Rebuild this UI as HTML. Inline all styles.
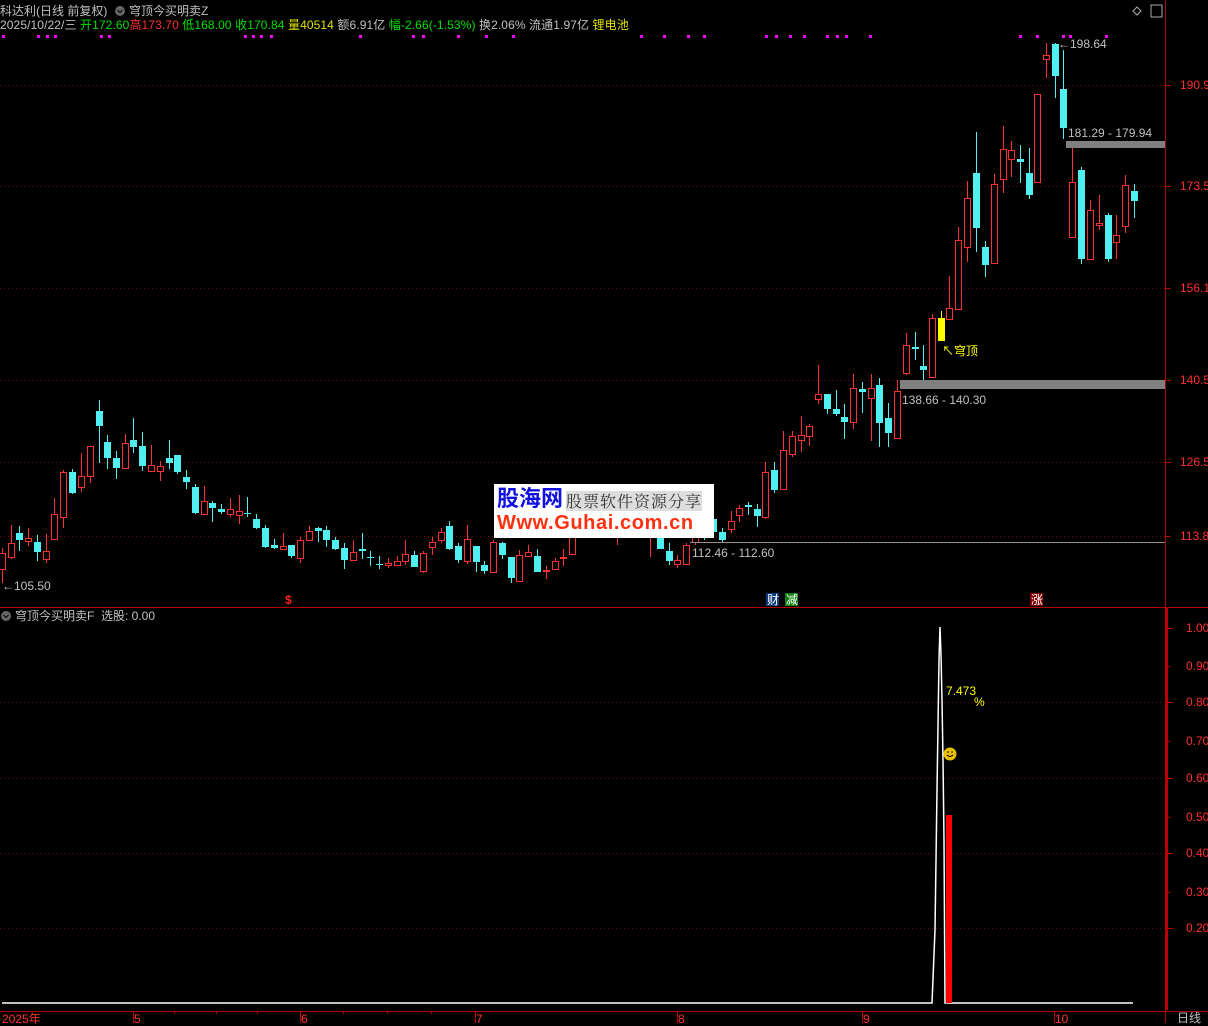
<!DOCTYPE html>
<html><head><meta charset="utf-8"><style>
body{margin:0;background:#000;width:1208px;height:1023px;overflow:hidden;font-family:"Liberation Sans","Noto Sans CJK SC",sans-serif}
svg{position:absolute;left:0;top:0}
.t{position:absolute;font-size:12px;white-space:nowrap;line-height:14px}
</style></head><body>
<svg id="s" width="1208" height="1023" xmlns="http://www.w3.org/2000/svg">
<g stroke="#6a0c0c" stroke-dasharray="1,3" stroke-width="1">
<line x1="0" y1="85.5" x2="1165" y2="85.5"/><line x1="0" y1="186.5" x2="1165" y2="186.5"/><line x1="0" y1="288.5" x2="1165" y2="288.5"/><line x1="0" y1="380.5" x2="1165" y2="380.5"/><line x1="0" y1="462.5" x2="1165" y2="462.5"/><line x1="0" y1="536.5" x2="1165" y2="536.5"/>
<line x1="0" y1="702.5" x2="1165" y2="702.5"/><line x1="0" y1="778.5" x2="1165" y2="778.5"/><line x1="0" y1="853.5" x2="1165" y2="853.5"/><line x1="0" y1="928.5" x2="1165" y2="928.5"/>
</g>
<g id="c"></g>
<rect x="900" y="380" width="265" height="9" fill="#808080"/>
<rect x="1066" y="141" width="99" height="7" fill="#808080"/>
<line x1="690" y1="542.5" x2="1165" y2="542.5" stroke="#909090"/>
<g id="m" fill="#ff00ff"></g>
<line x1="1165.5" y1="0" x2="1165.5" y2="1023" stroke="#b00000"/>
<line x1="1167" y1="608" x2="1167" y2="1010" stroke="#c00000" stroke-width="2"/>
<line x1="0" y1="607.5" x2="1208" y2="607.5" stroke="#b00000"/>
<line x1="0" y1="1011.5" x2="1208" y2="1011.5" stroke="#b00000"/>
<g stroke="#c00000"><line x1="1167" y1="628.5" x2="1173" y2="628.5"/><line x1="1167" y1="666.5" x2="1170" y2="666.5"/><line x1="1167" y1="702.5" x2="1173" y2="702.5"/><line x1="1167" y1="741.5" x2="1170" y2="741.5"/><line x1="1167" y1="778.5" x2="1173" y2="778.5"/><line x1="1167" y1="817.5" x2="1170" y2="817.5"/><line x1="1167" y1="853.5" x2="1173" y2="853.5"/><line x1="1167" y1="892.5" x2="1170" y2="892.5"/><line x1="1167" y1="928.5" x2="1173" y2="928.5"/>
<line x1="1165" y1="85.5" x2="1171" y2="85.5"/><line x1="1165" y1="186.5" x2="1171" y2="186.5"/><line x1="1165" y1="288.5" x2="1171" y2="288.5"/><line x1="1165" y1="380.5" x2="1171" y2="380.5"/><line x1="1165" y1="462.5" x2="1171" y2="462.5"/><line x1="1165" y1="536.5" x2="1171" y2="536.5"/>
<line x1="133.5" y1="1011" x2="133.5" y2="1023"/><line x1="300.5" y1="1011" x2="300.5" y2="1023"/><line x1="475.5" y1="1011" x2="475.5" y2="1023"/><line x1="677.5" y1="1011" x2="677.5" y2="1023"/><line x1="862.5" y1="1011" x2="862.5" y2="1023"/><line x1="1054.5" y1="1011" x2="1054.5" y2="1023"/>
<line x1="174.5" y1="1011" x2="174.5" y2="1014"/><line x1="216.5" y1="1011" x2="216.5" y2="1014"/><line x1="257.5" y1="1011" x2="257.5" y2="1014"/><line x1="343.5" y1="1011" x2="343.5" y2="1014"/><line x1="387.5" y1="1011" x2="387.5" y2="1014"/><line x1="431.5" y1="1011" x2="431.5" y2="1014"/>
</g>
<polyline fill="none" stroke="#fff" stroke-width="1.5" points="2,1003 932,1003 935,930 937,790 939,660 940,627 941,655 942,700 943,760 944,840 945,1003 1133,1003"/>
<rect x="946" y="815" width="6" height="188" fill="#ff0000"/>
<circle cx="950" cy="754" r="6.5" fill="#e8c000"/>
<path d="M947 755 q3 3 6 0" stroke="#000" fill="none"/><circle cx="948" cy="752" r="0.8"/><circle cx="952" cy="752" r="0.8"/>
<rect x="494" y="484" width="220" height="54" fill="#fff"/>
<circle cx="6" cy="616" r="5" fill="#666"/><path d="M3.5 615 l2.5 2.5 l2.5 -2.5" stroke="#000" fill="none"/>
<circle cx="120" cy="11" r="5" fill="#666"/><path d="M117.5 10 l2.5 2.5 l2.5 -2.5" stroke="#000" fill="none"/>
<path d="M1137 7 l4 4 l-4 4 l-4 -4z" stroke="#aaa" fill="none"/>
<rect x="1151" y="5" width="11" height="12" fill="none" stroke="#aaa"/>
<rect x="766" y="593" width="13" height="13" fill="#0a3a7a"/><rect x="785" y="593" width="13" height="13" fill="#108010"/><rect x="1030" y="593" width="13" height="13" fill="#800000"/>
</svg>
<div class="t" style="left:0;top:4px;color:#c0c0c0">科达利(日线 前复权)</div>
<div class="t" style="left:129px;top:4px;color:#c0c0c0">穹顶今买明卖Z</div>
<div class="t" style="left:0;top:18px;color:#c0c0c0;letter-spacing:0.1px">2025/10/22/三 <span style="color:#00e000">开172.60</span><span style="color:#ff3030">高173.70</span> <span style="color:#00e000">低168.00</span> <span style="color:#00e000">收170.84</span> <span style="color:#e0e000">量40514</span> 额6.91亿 <span style="color:#00e000">幅-2.66(-1.53%)</span> 换2.06% 流通1.97亿 <span style="color:#e0e000">锂电池</span></div>
<div class="t" style="left:1058px;top:37px;color:#c0c0c0">←198.64</div>
<div class="t" style="left:1068px;top:126px;color:#c0c0c0">181.29 - 179.94</div>
<div class="t" style="left:902px;top:393px;color:#c0c0c0">138.66 - 140.30</div>
<div class="t" style="left:692px;top:546px;color:#c0c0c0">112.46 - 112.60</div>
<div class="t" style="left:2px;top:579px;color:#c0c0c0">←105.50</div>
<div class="t" style="left:942px;top:344px;color:#ffff00">↖穹顶</div>
<div class="t" style="left:285px;top:593px;color:#ff2020;font-weight:bold">$</div>
<div class="t" style="left:767px;top:593px;color:#fff">财</div>
<div class="t" style="left:786px;top:593px;color:#fff">减</div>
<div class="t" style="left:1031px;top:593px;color:#fff">涨</div>
<div class="t" style="left:15px;top:609px;color:#c0c0c0">穹顶今买明卖F&nbsp; 选股: 0.00</div>
<div class="t" style="left:946px;top:684px;color:#ffff00">7.473</div>
<div class="t" style="left:974px;top:695px;color:#ffff00">%</div>
<div style="position:absolute;left:1180px;top:0;color:#ff3030;font-size:12px">
<div style="position:absolute;top:78px">190.9</div><div style="position:absolute;top:179px">173.5</div><div style="position:absolute;top:281px">156.1</div><div style="position:absolute;top:373px">140.5</div><div style="position:absolute;top:455px">126.5</div><div style="position:absolute;top:529px">113.8</div>
</div>
<div style="position:absolute;left:1186px;top:0;color:#ff3030;font-size:12px">
<div style="position:absolute;top:621px">1.00</div><div style="position:absolute;top:659px">0.90</div><div style="position:absolute;top:695px">0.80</div><div style="position:absolute;top:734px">0.70</div><div style="position:absolute;top:771px">0.60</div><div style="position:absolute;top:810px">0.50</div><div style="position:absolute;top:846px">0.40</div><div style="position:absolute;top:885px">0.30</div><div style="position:absolute;top:921px">0.20</div>
</div>
<div class="t" style="left:2px;top:1012px;color:#ff3030">2025年</div>
<div class="t" style="left:134px;top:1012px;color:#ff3030">5</div>
<div class="t" style="left:301px;top:1012px;color:#ff3030">6</div>
<div class="t" style="left:476px;top:1012px;color:#ff3030">7</div>
<div class="t" style="left:678px;top:1012px;color:#ff3030">8</div>
<div class="t" style="left:863px;top:1012px;color:#ff3030">9</div>
<div class="t" style="left:1055px;top:1012px;color:#ff3030">10</div>
<div class="t" style="left:1177px;top:1011px;color:#c0c0c0">日线</div>
<div class="t" style="left:497px;top:486px;color:#1010e0;font-size:22px;font-weight:bold;line-height:26px">股海网</div>
<div class="t" style="left:566px;top:491px;color:#333;font-size:16px;line-height:20px;letter-spacing:1px;background:#ddd;font-family:'Noto Serif CJK SC',serif">股票软件资源分享</div>
<div class="t" style="left:497px;top:511px;color:#ff3010;font-size:20px;font-weight:bold;line-height:24px;letter-spacing:0.6px">Www.Guhai.com.cn</div>
<script>
var C=[[2,553,569,548,583,1],[11,543,557,525,559,1],[19,533,540,526,551,0],[28,538,541,528,546,1],[37,542,552,535,561,0],[46,551,559,534,563,1],[54,514,539,498,539,1],[63,472,517,470,528,1],[72,472,493,469,494,0],[81,476,487,453,492,1],[90,446,476,446,483,1],[99,411,426,400,463,0],[107,442,458,435,469,0],[116,458,468,451,479,0],[125,443,468,434,468,1],[133,440,447,418,453,0],[142,446,466,432,471,0],[151,465,471,445,471,1],[160,466,471,461,481,1],[169,458,463,440,469,0],[177,455,472,455,474,0],[186,477,482,470,489,0],[195,487,513,484,514,0],[204,501,514,486,514,1],[212,503,508,501,522,0],[221,509,512,504,514,0],[230,509,514,498,517,1],[239,511,515,495,524,1],[247,513,514,497,517,0],[256,519,528,514,529,0],[265,528,547,525,548,0],[274,545,548,539,549,0],[283,546,549,533,549,1],[291,545,556,545,558,0],[300,540,558,537,563,1],[309,531,540,526,540,1],[318,528,531,527,542,0],[326,530,540,526,547,0],[335,540,549,537,550,0],[344,548,560,543,569,0],[353,552,560,540,560,1],[362,549,551,533,559,0],[370,557,558,551,566,0],[379,564,565,556,569,0],[388,563,565,558,568,1],[397,561,565,556,565,1],[405,554,561,540,565,1],[414,555,567,551,567,0],[423,553,571,551,573,1],[432,542,547,537,555,1],[441,532,540,528,543,1],[449,526,549,521,550,0],[458,546,560,543,563,0],[467,539,561,525,564,1],[476,546,562,546,572,0],[484,565,571,561,574,0],[493,542,572,540,572,1],[502,543,555,542,559,0],[511,557,578,557,583,0],[519,555,581,550,581,1],[528,552,556,545,556,1],[537,556,572,549,572,0],[546,570,571,566,579,1],[555,561,569,558,569,1],[563,557,558,549,566,1],[572,535,554,532,554,1],[617,520,530,515,545,1],[650,520,530,515,557,1],[660,525,549,520,549,0],[669,551,561,543,565,0],[677,560,564,555,568,1],[686,545,564,543,564,1],[695,537,542,532,545,1],[704,530,536,525,540,0],[713,519,532,515,535,0],[722,532,540,528,542,0],[731,521,529,511,533,1],[739,508,515,505,522,1],[748,505,507,502,515,0],[757,509,516,504,527,0],[765,472,517,462,519,1],[774,470,490,462,493,0],[783,450,489,431,489,1],[792,436,454,431,457,1],[801,435,440,416,452,1],[809,426,436,424,446,1],[818,394,399,365,404,1],[827,394,409,394,414,0],[836,409,414,390,416,0],[844,417,422,404,439,0],[853,388,422,374,429,1],[862,389,392,382,413,0],[871,388,398,374,441,1],[879,385,423,378,447,0],[888,418,433,403,447,0],[897,391,438,380,438,1],[906,345,373,333,375,1],[915,347,349,332,360,0],[923,366,370,345,380,0],[932,318,377,314,378,1],[941,318,341,311,341,2],[949,308,319,276,319,1],[958,240,309,227,309,1],[967,198,247,181,262,1],[976,173,228,132,252,0],[985,247,265,241,277,0],[994,184,263,174,263,1],[1003,149,179,126,193,1],[1011,150,159,141,177,1],[1020,159,162,145,183,0],[1029,173,195,148,199,0],[1037,94,182,94,182,1],[1046,55,59,43,78,1],[1055,44,76,43,98,0],[1063,89,128,50,139,0],[1072,182,237,148,237,1],[1081,170,259,167,264,0],[1090,210,259,200,259,1],[1099,223,225,195,230,1],[1108,215,259,213,262,0],[1116,235,242,215,259,1],[1125,185,226,175,233,1],[1134,191,201,184,218,0]];
var h='';C.forEach(function(c){var x=c[0]+0.5,col=c[5]==1?'#ff3030':c[5]==2?'#ffff00':'#50f0f0';var bh=Math.max(1,c[2]-c[1]);
h+='<line x1="'+x+'" y1="'+c[3]+'" x2="'+x+'" y2="'+c[4]+'" stroke="'+col+'"/>';
if(c[5]==1)h+='<rect x="'+(x-3)+'" y="'+(c[1]+0.5)+'" width="6" height="'+bh+'" fill="#000" stroke="'+col+'"/>';
else h+='<rect x="'+(x-3.5)+'" y="'+c[1]+'" width="7" height="'+bh+'" fill="'+col+'"/>';});
document.getElementById('c').innerHTML=h;
var M=[2,37,46,54,100,108,244,252,260,270,359,412,422,457,485,512,640,663,687,703,765,775,789,803,826,836,845,869,1019,1036,1062,1069,1105];
var m='';M.forEach(function(x){m+='<rect x="'+x+'" y="35" width="3" height="3"/>';});document.getElementById('m').innerHTML=m;
</script>
</body></html>
